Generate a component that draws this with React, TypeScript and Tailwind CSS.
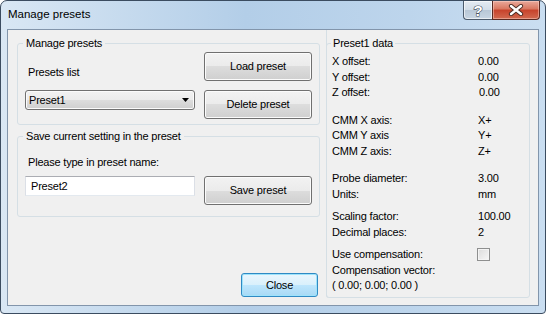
import React from 'react'

const btnFace = 'bg-[linear-gradient(#f2f2f2,#ebebeb_50%,#dddddd_50%,#cfcfcf)]'

function PushButton({ label, className = '' }: { label: string; className?: string }) {
    return (
        <div className={`flex items-center justify-center rounded-[3px] border border-[#707070] shadow-[inset_0_0_0_1px_#fbfbfb] ${btnFace} ${className}`}>
            <span>{label}</span>
        </div>
    )
}

function Row({ label, value }: { label: string; value?: React.ReactNode }) {
    return (
        <div className="grid grid-cols-[146px_1fr] h-[15.5px] items-center">
            <span>{label}</span>
            <span>{value}</span>
        </div>
    )
}

export default function App() {
    return (
        <div className="w-[546px] h-[314px] flex flex-col rounded-t-[7px] rounded-b-[4px] border border-[#3b4c60] bg-[linear-gradient(90deg,#d9e7f4,#b3cee8_45%,#bdd5ec_75%,#cadef1)] font-['Liberation_Sans',Arial,sans-serif] text-[11px] tracking-[-0.2px] text-black">

            {/* title bar */}
            <div className="h-[28px] flex justify-between">
                <div className="pl-[7px] pt-[5px] text-[11.5px] tracking-normal text-[#000]">Manage presets</div>
                <div className="flex mr-[5px] h-[19px]">
                    <div className="w-[29px] h-full flex items-center justify-center rounded-bl-[4px] border border-t-0 border-r-0 border-[#4c5b6c] bg-[linear-gradient(#e4ebf2,#d2dde8_50%,#b8c7d6_50%,#c8d6e3)] shadow-[inset_0_0_0_1px_rgba(255,255,255,0.6)]">
                        <svg width="12" height="15" viewBox="0 0 12 15">
                            <text x="6" y="13" textAnchor="middle" fontFamily="Liberation Sans, Arial, sans-serif" fontWeight="700" fontSize="15" fill="#ffffff" stroke="#4a5563" strokeWidth="1.2" paintOrder="stroke">?</text>
                        </svg>
                    </div>
                    <div className="w-[48px] h-full flex items-center justify-center rounded-br-[4px] border border-t-0 border-[#5a2a22] bg-[linear-gradient(#e9a99b,#d8765f_45%,#c7422b_50%,#d26a50)] shadow-[inset_0_0_0_1px_rgba(255,220,210,0.45)]">
                        <svg width="16" height="12" viewBox="0 0 16 12">
                            <path d="M3 2 L13 10 M13 2 L3 10" stroke="#4a2a22" strokeWidth="4.2" strokeLinecap="round" />
                            <path d="M3 2 L13 10 M13 2 L3 10" stroke="#ffffff" strokeWidth="2.4" strokeLinecap="round" />
                        </svg>
                    </div>
                </div>
            </div>

            {/* client area */}
            <div className="mx-[6px] h-[277px] border border-[#8295ab] bg-[#f0f0f0] flex">

                {/* left column */}
                <div className="ml-[9px] w-[303px] pt-[6px] flex flex-col">
                    <fieldset className="border border-[#d5dfe5] rounded-[3px] pl-[7px] pr-[7px] pt-[1px] pb-[5px]">
                        <legend className="-ml-[2px] px-[3px] h-[15px] leading-[15px]">Manage presets</legend>
                        <div className="flex gap-[9px]">
                            <div className="w-[170px] pt-[13px] leading-[14px] pl-[3px]">Presets list</div>
                            <PushButton label="Load preset" className="w-[108px] h-[29px]" />
                        </div>
                        <div className="flex gap-[9px] mt-[9px] items-start">
                            <div className={`w-[170px] h-[20px] flex items-center justify-between rounded-[3px] border border-[#707070] shadow-[inset_0_0_0_1px_#fbfbfb] ${btnFace} pl-[3px] pr-[5px]`}>
                                <span>Preset1</span>
                                <svg width="7" height="4" viewBox="0 0 7 4"><path d="M0 0 H7 L3.5 4 Z" fill="#000" /></svg>
                            </div>
                            <PushButton label="Delete preset" className="w-[108px] h-[29px]" />
                        </div>
                    </fieldset>

                    <fieldset className="mt-[4px] border border-[#d5dfe5] rounded-[3px] pl-[7px] pr-[7px] pb-[11px]">
                        <legend className="-ml-[2px] px-[3px] h-[15px] leading-[15px]">Save current setting in the preset</legend>
                        <div className="mt-[11px] leading-[14px] pl-[3px]">Please type in preset name:</div>
                        <div className="flex gap-[9px] mt-[7px] items-start">
                            <div className="w-[170px] h-[20px] flex items-center pl-[5px] bg-white border border-[#abadb3] border-b-[#e3e9ef] border-x-[#dbdfe6]">Preset2</div>
                            <PushButton label="Save preset" className="w-[108px] h-[29px]" />
                        </div>
                    </fieldset>

                    <div className="flex-1 flex items-end justify-end pr-[2px] pb-[8px]">
                        <div className="w-[77px] h-[24px] flex items-center justify-center rounded-[3px] border border-[#2f8ac4] shadow-[inset_0_0_0_1px_#9ee3fb] bg-[linear-gradient(#eaf6fd,#d9f0fc_50%,#bee6fd_50%,#a7d9f5)]">
                            Close
                        </div>
                    </div>
                </div>

                {/* right column */}
                <div className="ml-[6px] w-[204px] mb-[7px] pt-[6px] flex flex-col border-l border-[#d5dfe5] rounded-bl-[3px]">
                    <fieldset className="flex-1 -ml-[1px] border border-[#d5dfe5] rounded-[3px] pl-[5px]">
                        <legend className="-ml-[1px] px-[2px] h-[15px] leading-[15px]">Preset1 data</legend>
                        <div className="mt-[2px]">
                            <Row label="X offset:" value="0.00" />
                            <Row label="Y offset:" value="0.00" />
                            <Row label="Z offset:" value={<span className="pl-[1px]">0.00</span>} />
                        </div>
                        <div className="mt-[12px]">
                            <Row label="CMM X axis:" value="X+" />
                            <Row label="CMM Y axis" value="Y+" />
                            <Row label="CMM Z axis:" value="Z+" />
                        </div>
                        <div className="mt-[12px]">
                            <Row label="Probe diameter:" value="3.00" />
                            <Row label="Units:" value="mm" />
                        </div>
                        <div className="mt-[7px]">
                            <Row label="Scaling factor:" value="100.00" />
                            <Row label="Decimal places:" value="2" />
                        </div>
                        <div className="mt-[7px]">
                            <Row label="Use compensation:" value={<span className="block w-[13px] h-[13px] -ml-[1px] border border-[#8e8f8f] bg-[linear-gradient(135deg,#dcdcdc,#f7f7f7)] shadow-[inset_0_0_0_1px_#f4f4f4]" />} />
                            <Row label="Compensation vector:" />
                            <Row label="( 0.00; 0.00; 0.00 )" />
                        </div>
                    </fieldset>
                </div>
            </div>
        </div>
    )
}
